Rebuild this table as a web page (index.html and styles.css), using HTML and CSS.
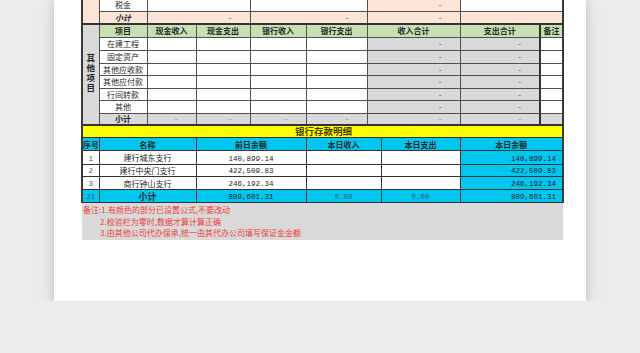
FILE: index.html
```html
<!DOCTYPE html>
<html lang="zh-CN">
<head>
<meta charset="utf-8">
<title>银行存款明细</title>
<link rel="stylesheet" href="styles.css">
</head>
<body>
<div class="paper">
  <table class="sheet">
    <colgroup>
      <col class="c1"><col class="c2"><col class="c3"><col class="c4"><col class="c5">
      <col class="c6"><col class="c7"><col class="c8"><col class="c9"><col class="c10">
    </colgroup>
    <tbody class="top">
      <tr class="h13">
        <td rowspan="2" class="pink"></td>
        <td>税金</td>
        <td colspan="2"></td>
        <td colspan="2"></td>
        <td colspan="2" class="pink d">-</td>
        <td colspan="2"></td>
      </tr>
      <tr class="h13 pink">
        <td class="bi">小计</td>
        <td colspan="2" class="d">-</td>
        <td colspan="2" class="d">-</td>
        <td colspan="2" class="d">-</td>
        <td colspan="2"></td>
      </tr>
    </tbody>
    <tbody class="other">
      <tr class="h13 hdr">
        <td rowspan="8" class="vlabel"><span class="vtext">其他项目</span></td>
        <td class="b">项目</td>
        <td class="b">现金收入</td>
        <td class="b">现金支出</td>
        <td class="b">银行收入</td>
        <td class="b">银行支出</td>
        <td colspan="2" class="b">收入合计</td>
        <td class="b">支出合计</td>
        <td class="b thickl">备注</td>
      </tr>
      <tr class="h13"><td>在建工程</td><td></td><td></td><td></td><td></td><td colspan="2" class="gray d">-</td><td class="gray d">-</td><td class="thickl"></td></tr>
      <tr class="h13"><td>固定资产</td><td></td><td></td><td></td><td></td><td colspan="2" class="gray d">-</td><td class="gray d">-</td><td class="thickl"></td></tr>
      <tr class="h12"><td>其他应收款</td><td></td><td></td><td></td><td></td><td colspan="2" class="gray d">-</td><td class="gray d">-</td><td class="thickl"></td></tr>
      <tr class="h13"><td>其他应付款</td><td></td><td></td><td></td><td></td><td colspan="2" class="gray d">-</td><td class="gray d">-</td><td class="thickl"></td></tr>
      <tr class="h12"><td>行间转款</td><td></td><td></td><td></td><td></td><td colspan="2" class="gray d">-</td><td class="gray d">-</td><td class="thickl"></td></tr>
      <tr class="h13"><td>其他</td><td></td><td></td><td></td><td></td><td colspan="2" class="gray d">-</td><td class="gray d">-</td><td class="thickl"></td></tr>
      <tr class="h12 gray sub">
        <td class="b">小计</td>
        <td class="d lt">-</td><td class="d lt">-</td><td class="d lt">-</td><td class="d lt">-</td>
        <td colspan="2" class="d lt">-</td><td class="d lt">-</td><td class="thickl"></td>
      </tr>
    </tbody>
    <tbody class="bank">
      <tr class="h11"><td colspan="10" class="title">银行存款明细</td></tr>
      <tr class="h13 cyan">
        <td class="b">序号</td>
        <td colspan="2" class="b">名称</td>
        <td colspan="2" class="b">前日余额</td>
        <td colspan="2" class="b">本日收入</td>
        <td class="b">本日支出</td>
        <td colspan="2" class="b">本日余额</td>
      </tr>
      <tr class="h14">
        <td class="n idx">1</td>
        <td colspan="2">建行城东支行</td>
        <td colspan="2" class="n">140,899.14</td>
        <td colspan="2"></td>
        <td></td>
        <td colspan="2" class="n cyan r">140,899.14</td>
      </tr>
      <tr class="h12">
        <td class="n idx">2</td>
        <td colspan="2">建行中央门支行</td>
        <td colspan="2" class="n">422,509.83</td>
        <td colspan="2"></td>
        <td></td>
        <td colspan="2" class="n cyan r">422,509.83</td>
      </tr>
      <tr class="h13">
        <td class="n idx">3</td>
        <td colspan="2">商行钟山支行</td>
        <td colspan="2" class="n">246,192.34</td>
        <td colspan="2"></td>
        <td></td>
        <td colspan="2" class="n cyan r">246,192.34</td>
      </tr>
      <tr class="h13 cyan">
        <td class="n idx blue">21</td>
        <td colspan="2" class="b big">小计</td>
        <td colspan="2" class="n">809,601.31</td>
        <td colspan="2" class="n blue">0.00</td>
        <td class="n blue">0.00</td>
        <td colspan="2" class="n r">809,601.31</td>
      </tr>
      <tr class="notes-row">
        <td colspan="10" class="notes">
          <div class="note">备注:1.有颜色的部分已设置公式,不要改动</div>
          <div class="note ind">2.校验栏为零时,数据才算计算正确</div>
          <div class="note ind">3.由其他公司代办保承,统一由其代办公司填写保证金金额</div>
        </td>
      </tr>
    </tbody>
  </table>
</div>
</body>
</html>
```

FILE: styles.css
```css
html, body {
  margin: 0;
  padding: 0;
}
body {
  background: #ececec;
  font-family: "Noto Sans CJK SC", "Noto Sans", sans-serif;
  overflow: hidden;
}
.paper {
  width: 532px;
  height: 304px;
  margin: -3px auto 0;
  padding-left: 27px;
  box-sizing: border-box;
  background: #ffffff;
  box-shadow: 0 7px 16px rgba(0, 0, 0, 0.16), 0 0 8px rgba(0, 0, 0, 0.07);
}
.sheet {
  border-collapse: collapse;
  table-layout: fixed;
  width: 481px;
  font-size: 8px;
  color: #262626;
  border: 2px solid #3a3a3a;
}
.c1 { width: 17px; }
.c2 { width: 48px; }
.c3 { width: 49px; }
.c4 { width: 54px; }
.c5 { width: 56px; }
.c6 { width: 61px; }
.c7 { width: 14px; }
.c8 { width: 79px; }
.c9 { width: 80px; }
.c10 { width: 23px; }

.sheet td {
  border: 1px solid #505050;
  padding: 0;
  text-align: center;
  vertical-align: middle;
  white-space: nowrap;
  overflow: hidden;
  line-height: 9px;
}
.h11 { height: 11px; }
.h12 { height: 12px; }
.h13 { height: 13px; }
.h14 { height: 14px; }

.pink, .pink td { background: #fce4d6; }
.gray, .gray td { background: #d9d9d9; }
.cyan, .cyan td { background: #00c6f0; }
.hdr td { background: #c6e0b4; }
.hdr td.vlabel { background: #d9d9d9; }

.other .hdr td { border-top: 2px solid #333; }
.thickl { border-left: 2px solid #333 !important; }

.b { font-weight: 700; }
.bi { font-weight: 700; font-style: italic; }
.big { font-size: 9px; }

.d {
  text-align: right !important;
  padding-right: 17px !important;
  font-family: "Liberation Mono", monospace;
  font-size: 8px;
  color: #555;
}
.d.lt { color: #8a8a8a; }

.vlabel {
  font-weight: 700;
  font-size: 8.5px;
}
.vtext {
  display: inline-block;
  writing-mode: vertical-rl;
  text-orientation: upright;
  letter-spacing: 1.5px;
  line-height: 10px;
}

.sheet td.title {
  background: #ffff00;
  border-top: 2px solid #333;
  font-size: 9.5px;
  font-weight: 700;
  color: #4a3a00;
  line-height: 11px;
  overflow: visible;
  text-align: center;
  padding-left: 2px;
}
.bank td { border-color: #333; }

.n {
  font-family: "Liberation Mono", "DejaVu Sans Mono", monospace;
  font-size: 7.5px;
  vertical-align: bottom !important;
  line-height: 9px !important;
  color: #1e1e1e;
}
.n.r {
  text-align: right;
  padding-right: 6px;
}
.idx { color: #555; }
.blue { color: #2f5f7a; }

.notes-row { height: 37px; }
.sheet td.notes {
  background: #d9d9d9;
  text-align: left;
  vertical-align: top;
  color: #f23a3a;
  border-left: hidden;
  border-right: hidden;
  border-bottom: hidden;
  padding-top: 1px;
}
.note {
  line-height: 11.5px;
  font-size: 8px;
  padding-left: 1px;
}
.note.ind { padding-left: 18px; }
```
